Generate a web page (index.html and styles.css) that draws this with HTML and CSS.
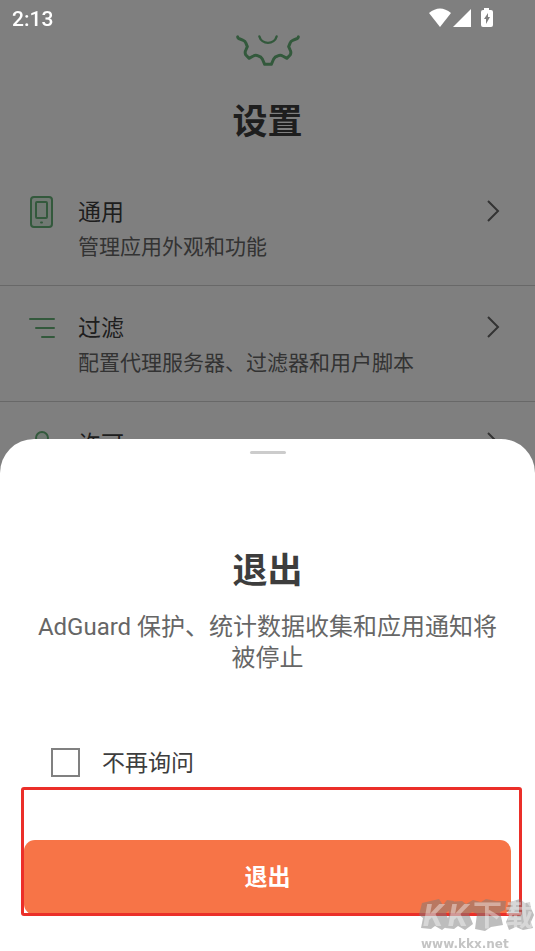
FILE: index.html
```html
<!DOCTYPE html>
<html lang="zh-CN">
<head>
<meta charset="utf-8">
<meta name="viewport" content="width=device-width, initial-scale=1">
<title>设置</title>
<link rel="stylesheet" href="styles.css">
</head>
<body>
<main class="settings">
  <header class="hero">
    <svg class="gear" viewBox="0 0 192 102" aria-hidden="true">
      <path d="M5 8Q5 13 12 15L22 19Q28 21 30 28L34 38L29 49Q26 55 29 62L39 73L52 66Q59 62 67 66Q75 68 79 75L86 91H106L113 75Q117 68 125 66Q133 62 140 66L153 73L163 62Q166 55 163 49L158 38L162 28Q164 21 170 19L180 15Q187 13 187 8"/>
      <path class="hub" d="M70 7A27 27 0 0 0 122 7"/>
    </svg>
    <h1 class="title">设置</h1>
  </header>
  <nav class="list">
    <a class="row" href="#general">
      <svg class="row-icon" viewBox="0 0 34 34" aria-hidden="true">
        <rect class="tint" x="6" y="2" width="21" height="30" rx="3"/>
        <rect x="11" y="7" width="11" height="16" rx="1"/>
        <path d="M16 27.500h1"/>
      </svg>
      <span class="row-text"><span class="row-title">通用</span><span class="row-note">管理应用外观和功能</span></span>
      <svg class="chevron" viewBox="0 0 14 22" aria-hidden="true"><path d="M1 1l10 10L1 21"/></svg>
    </a>
    <a class="row" href="#filtering">
      <svg class="row-icon" viewBox="0 0 34 34" aria-hidden="true">
        <path d="M5 8h24M11 17h18M17 26h12"/>
      </svg>
      <span class="row-text"><span class="row-title">过滤</span><span class="row-note">配置代理服务器、过滤器和用户脚本</span></span>
      <svg class="chevron" viewBox="0 0 14 22" aria-hidden="true"><path d="M1 1l10 10L1 21"/></svg>
    </a>
    <a class="row" href="#license">
      <svg class="row-icon" viewBox="0 0 34 34" aria-hidden="true">
        <circle class="tint" cx="17" cy="11" r="6"/>
        <path d="M13 16v15l4-3 4 3V16"/>
      </svg>
      <span class="row-text"><span class="row-title">许可</span></span>
      <svg class="chevron" viewBox="0 0 14 22" aria-hidden="true"><path d="M1 1l10 10L1 21"/></svg>
    </a>
  </nav>
</main>

<div class="backdrop"></div>

<div class="status">
  <span class="clock">2:13</span>
  <svg class="signals" viewBox="0 0 66 20" aria-hidden="true">
    <path d="M0 5Q11-4 22 5L11 19Z"/>
    <path d="M24 19L42 1V19Z"/>
    <path fill-rule="evenodd" d="M55 0h5v2h2q2 0 2 2v13q0 2-2 2h-8q-2 0-2-2V4q0-2 2-2h1ZM59 5l-4 6h2v5l4-7h-2Z"/>
  </svg>
</div>

<section class="sheet" role="dialog" aria-labelledby="exit-title">
  <div class="handle"></div>
  <h2 class="title sheet-title" id="exit-title">退出</h2>
  <p class="message">AdGuard 保护、统计数据收集和应用通知将被停止</p>
  <div class="option">
    <input class="check" type="checkbox" id="dont-ask">
    <label class="check-label" for="dont-ask">不再询问</label>
  </div>
  <div class="action">
    <button class="exit" type="button">退出</button>
    <div class="frame"></div>
  </div>
</section>

<div class="mark">
  <svg class="mark-art" viewBox="0 0 116 46" aria-hidden="true">
    <g class="blot">
      <path d="M3 15L20 11L24 17L28 12L35 13L34 19L27 25L31 36L23 42L16 38L12 41L2 40L4 30L0 27Z"/>
      <path d="M29 14L43 13L47 16L54 12L62 14L60 20L50 26L54 36L46 42L39 38L35 41L26 40L30 27Z"/>
      <path d="M52 15L62 14L67 11L77 13L87 13L86 22L81 24L84 37L72 39L66 43L56 41L58 26L51 23Z"/>
      <path d="M91 14L101 11L106 15L111 14L112 20L115 27L112 34L114 40L104 42L97 39L90 42L87 34L90 27L87 21Z"/>
    </g>
    <text class="ink latin" x="4" y="38">K</text>
    <text class="ink latin" x="29" y="38">K</text>
    <text class="ink" x="54" y="38">下</text>
    <text class="ink" x="86" y="38">载</text>
  </svg>
  <span class="mark-url">www.kkx.net</span>
</div>
</body>
</html>
```
FILE: styles.css
```css
* { box-sizing: border-box; }

body {
  margin: 0;
  min-height: 100vh;
  overflow: hidden;
  background: #fff;
  color: #3d3d3d;
  font-family: Roboto, "Noto Sans CJK SC", sans-serif;
}

.settings {
  height: 100vh;
  overflow: hidden;
}

.hero {
  display: flex;
  flex-direction: column;
  align-items: center;
  gap: 31px;
  padding: 34px 0 23px;
}

.gear {
  width: 64px;
  height: 34px;
  fill: none;
  stroke: #67b279;
  stroke-width: 9;
  stroke-linecap: round;
  stroke-linejoin: round;
}

.gear .hub { stroke-width: 7; }

.title {
  margin: 0;
  font-size: 35px;
  line-height: 48px;
  font-weight: 700;
}

.row {
  display: flex;
  align-items: flex-start;
  height: 116px;
  padding: 25px 34px 0 25px;
  border-bottom: 1px solid #d0d0d0;
  color: inherit;
  text-decoration: none;
}

.row-icon {
  flex: none;
  width: 34px;
  height: 34px;
  margin-right: 19px;
  fill: none;
  stroke: #67b279;
  stroke-width: 2;
  stroke-linecap: round;
  stroke-linejoin: round;
}

.row-icon .tint { fill: #e2f2e6; }

.row-text {
  flex: 1;
  display: flex;
  flex-direction: column;
  padding-top: 1px;
  line-height: 34px;
}

.row-title { font-size: 23px; }

.row-note {
  font-size: 21px;
  color: #666;
}

.chevron {
  flex: none;
  width: 14px;
  height: 22px;
  margin-top: 5px;
  fill: none;
  stroke: #666;
  stroke-width: 2;
}

.backdrop {
  position: fixed;
  inset: 0;
  background: rgba(0, 0, 0, 0.5);
}

.status {
  position: fixed;
  top: 0;
  left: 0;
  right: 0;
  display: flex;
  align-items: center;
  justify-content: space-between;
  height: 36px;
  padding: 0 40px 0 12px;
  color: #fff;
  font-size: 21px;
  font-weight: 500;
}

.clock { padding-top: 2px; }

.signals {
  width: 66px;
  height: 20px;
  fill: #fff;
}

.sheet {
  position: fixed;
  left: 0;
  right: 0;
  bottom: 0;
  padding: 12px 24px 36px;
  border-radius: 34px 34px 0 0;
  background: #fff;
}

.handle {
  width: 36px;
  height: 3px;
  margin: 0 auto 94px;
  border-radius: 2px;
  background: #ccc;
}

.sheet-title { text-align: center; }

.message {
  margin: 16px 0 0;
  padding: 0 12px;
  color: #666;
  font-size: 24px;
  line-height: 31px;
  text-align: center;
}

.option {
  display: flex;
  align-items: center;
  gap: 22px;
  margin: 71px 27px 0;
}

.check {
  appearance: none;
  width: 29px;
  height: 29px;
  margin: 0;
  border: 2px solid #808080;
  background: #fff;
}

.check-label {
  padding-top: 4px;
  font-size: 23px;
  line-height: 30px;
}

.action {
  position: relative;
  margin-top: 61px;
}

.exit {
  display: block;
  width: 100%;
  height: 75px;
  padding: 0 0 5px;
  border: 0;
  border-radius: 11px;
  background: #f77447;
  color: #fff;
  font: inherit;
  font-size: 23px;
  font-weight: 700;
}

.frame {
  position: absolute;
  inset: -53px -11px -1px -3px;
  border: 3px solid #eb2f29;
  border-radius: 3px;
  pointer-events: none;
}

.mark {
  position: fixed;
  right: 0;
  bottom: 0;
  display: flex;
  flex-direction: column;
  width: 116px;
}

.mark-art {
  width: 116px;
  height: 46px;
}

.blot {
  fill: #7d7d7d;
  opacity: 0.5;
}

.ink {
  fill: rgba(255, 255, 255, 0.4);
  font-size: 29px;
  font-weight: 700;
}

.latin {
  font-size: 32px;
  font-style: italic;
}

.mark-url {
  padding: 3px 0 0 2px;
  color: #c4c4c4;
  font-family: "DejaVu Sans", sans-serif;
  font-size: 12px;
  font-weight: 700;
  line-height: 14px;
}
```
